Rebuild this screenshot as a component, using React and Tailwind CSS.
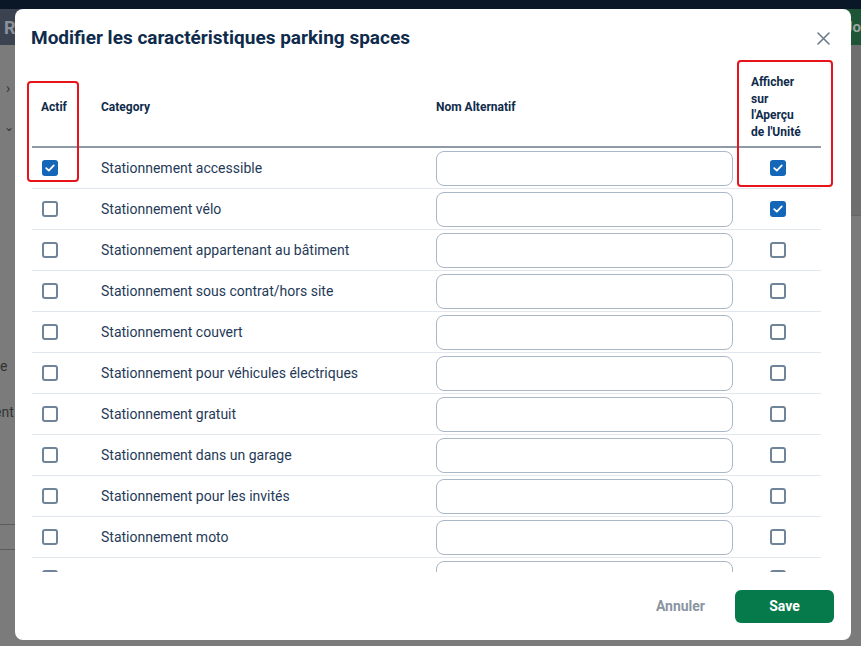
import React from "react";

const rows = [
  { name: "Stationnement accessible", actif: true, show: true },
  { name: "Stationnement vélo", actif: false, show: true },
  { name: "Stationnement appartenant au bâtiment" },
  { name: "Stationnement sous contrat/hors site" },
  { name: "Stationnement couvert" },
  { name: "Stationnement pour véhicules électriques" },
  { name: "Stationnement gratuit" },
  { name: "Stationnement dans un garage" },
  { name: "Stationnement pour les invités" },
  { name: "Stationnement moto" },
  { name: "Stationnement privé" },
];

function Checkbox({ checked }) {
  if (checked) {
    return (
      <span className="flex h-4 w-4 items-center justify-center rounded-[3px] bg-[#1466b8]">
        <svg width="12" height="12" viewBox="0 0 12 12" fill="none">
          <path d="M2.2 6.2 4.8 8.6 9.8 3.4" stroke="white" strokeWidth="1.8" strokeLinecap="round" strokeLinejoin="round" />
        </svg>
      </span>
    );
  }
  return <span className="block h-4 w-4 rounded-[3px] border-2 border-[#6f8499] bg-white" />;
}

function Row({ row }) {
  return (
    <div className="flex h-[41px] shrink-0 items-center border-b border-[#e2e7ed]">
      <div className="w-[53px] pl-[10px]">
        <Checkbox checked={row.actif} />
      </div>
      <div className="w-[335px] pl-4 text-[14px] text-[#1f3a58]">{row.name}</div>
      <div className="w-[329px] pl-4">
        <div className="h-[35px] w-[297px] rounded-lg border border-[#aab7c6] bg-white" />
      </div>
      <div className="w-[72px] pl-[21px]">
        <Checkbox checked={row.show} />
      </div>
    </div>
  );
}

export default function App() {
  return (
    <div className="relative flex h-[646px] w-[861px] flex-col overflow-hidden bg-[#7b7b7b] font-[Roboto,sans-serif]">
      {/* page behind the overlay */}
      <div className="h-[9px] bg-[#0a1727]" />
      <div className="flex h-[36px] items-center justify-between bg-[#3b4350]">
        <span className="pl-[4px] text-[18px] font-bold text-[#8a929c]">R</span>
        <div className="flex h-full items-center bg-[#1d5536] pr-0 pl-[2px]">
          <span className="text-[15px] font-bold text-[#9aa59e]">Jo</span>
        </div>
      </div>
      <div className="flex flex-1">
        <div className="flex w-[15px] flex-col text-[#333]">
          <span className="mt-[36px] pl-[6px] text-[14px] leading-none">›</span>
          <span className="mt-[26px] pl-[4px] text-[12px] leading-none">⌄</span>
          <span className="mt-[226px] text-[14px] leading-none">e</span>
          <span className="mt-[32px] -ml-[6px] text-[14px] leading-none">ent</span>
          <div className="mt-[105px] h-px bg-[#5c5c5c]" />
          <div className="mt-[24px] h-px bg-[#5c5c5c]" />
        </div>
        <div className="flex-1" />
        <div className="flex w-[10px] flex-col">
          <div className="h-[170px] bg-[#6f6f6f]" />
          <div className="h-px bg-[#666]" />
        </div>
      </div>

      {/* modal */}
      <div className="absolute left-[15px] top-[9px] flex h-[631px] w-[836px] flex-col rounded-lg bg-white">
        <div className="flex h-[51px] shrink-0 items-start justify-between pl-4 pr-[21px] pt-[17px]">
          <h2 className="text-[19px] font-bold leading-6 text-[#0f2b4b]">
            Modifier les caractéristiques parking spaces
          </h2>
          <svg className="mt-[6px]" width="13" height="13" viewBox="0 0 13 13" fill="none">
            <path d="M1 1 12 12M12 1 1 12" stroke="#6b7b8c" strokeWidth="1.6" strokeLinecap="round" />
          </svg>
        </div>

        <div className="ml-[17px] flex h-[512px] w-[789px] shrink-0 flex-col overflow-hidden pt-[4px]">
          <div className="flex h-[84px] shrink-0 items-center border-b-2 border-[#8e9aa8] pt-[4px] text-[12px] font-bold text-[#0f2b4b]">
            <div className="w-[53px] pl-[9px]">Actif</div>
            <div className="w-[335px] pl-4">Category</div>
            <div className="w-[329px] pl-4">Nom Alternatif</div>
            <div className="w-[56px] pl-[2px] leading-[16.5px]">Afficher sur l'Aperçu de l'Unité</div>
          </div>
          {rows.map((row) => (
            <Row key={row.name} row={row} />
          ))}
        </div>

        <div className="flex flex-1 items-center justify-end gap-[14px] pr-[17px]">
          <button className="px-4 text-[14px] font-bold text-[#8a95a2]">Annuler</button>
          <button className="h-[33px] w-[99px] rounded-md bg-[#077a4b] text-[14px] font-bold text-white">
            Save
          </button>
        </div>
      </div>

      {/* highlight boxes */}
      <div className="absolute left-[27px] top-[81px] h-[101px] w-[52px] rounded-[4px] border-2 border-[#e8141c]" />
      <div className="absolute left-[737px] top-[60px] h-[127px] w-[96px] rounded-[4px] border-2 border-[#e8141c]" />
    </div>
  );
}
